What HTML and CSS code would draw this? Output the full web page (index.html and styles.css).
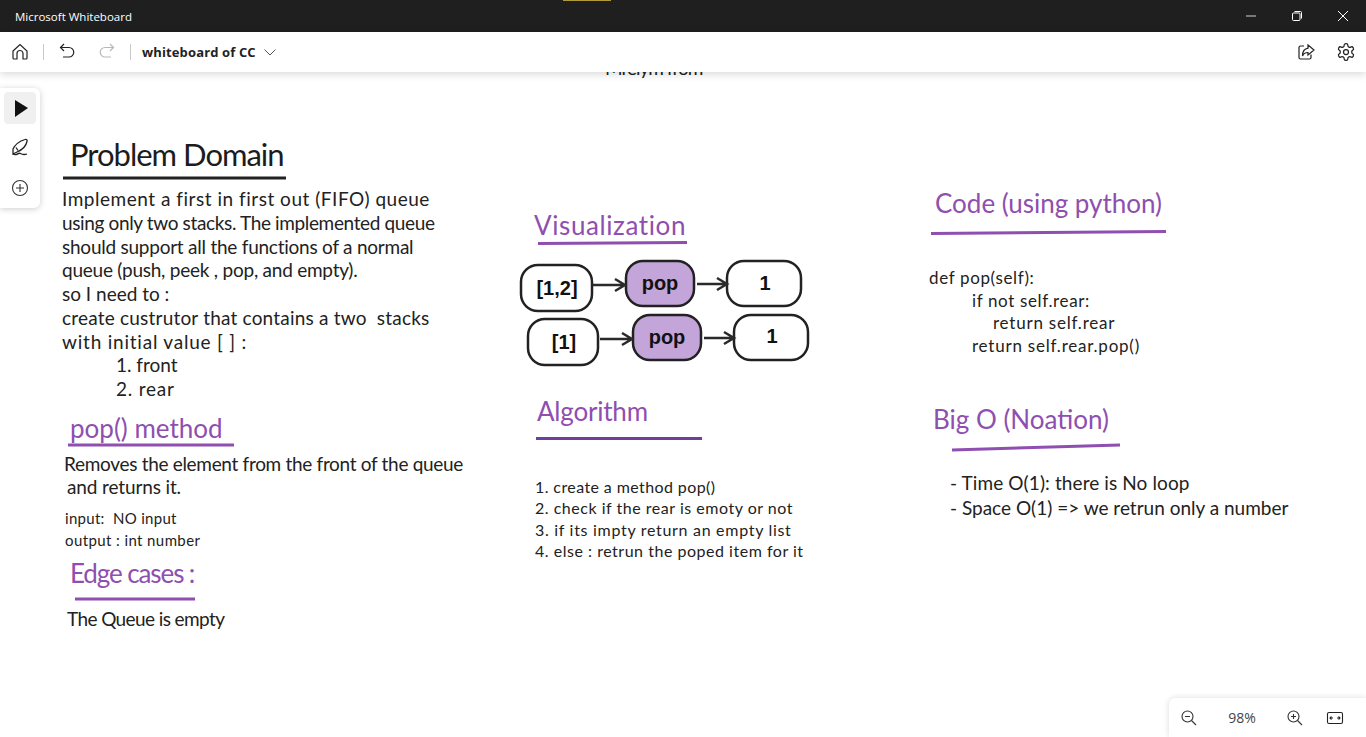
FILE: index.html
```html
<!DOCTYPE html>
<html>
<head>
  <title>Microsoft Whiteboard</title>
  <link rel="stylesheet" href="styles.css">
</head>
<body>
  <div class="titlebar">
    <span class="app-name">Microsoft Whiteboard</span>
    <div class="window-btns">
      <span class="win-btn"><svg width="12" height="12" viewBox="0 0 12 12"><path d="M1 6H11" stroke="#a0a0a0" stroke-width="1.4"/></svg></span>
      <span class="win-btn"><svg width="12" height="12" viewBox="0 0 12 12" fill="none" stroke="#fff"><rect x="1.5" y="3" width="7.5" height="7.5" rx="1"/><path d="M3.5 1.5H9.5a1 1 0 0 1 1 1V8.500"/></svg></span>
      <span class="win-btn"><svg width="12" height="12" viewBox="0 0 12 12"><path d="M1 1L11 11M11 1L1 11" stroke="#fff"/></svg></span>
    </div>
  </div>

  <div class="toolbar">
    <span class="tool-btn"><svg width="20" height="20" viewBox="0 0 20 20" fill="none" stroke="#222" stroke-width="1.2"><path d="M3 9L10 2.500L17 9V16a1 1 0 0 1-1 1H13V11.500a3 3 0 0 0-6 0V17H4a1 1 0 0 1-1-1Z"/></svg></span>
    <span class="sep"></span>
    <span class="tool-btn"><svg width="20" height="20" viewBox="0 0 20 20" fill="none" stroke="#222" stroke-width="1.2"><path d="M7 2L3.500 5.500L7 9"/><path d="M3.500 5.500H12a4.500 4.500 0 0 1 0 9.500H6"/></svg></span>
    <span class="tool-btn redo"><svg width="20" height="20" viewBox="0 0 20 20" fill="none" stroke="#b8b8b8" stroke-width="1.2"><path d="M13 2L16.500 5.500L13 9"/><path d="M16.500 5.500H8a4.500 4.500 0 0 0 0 9.500H14"/></svg></span>
    <span class="sep"></span>
    <span class="board-name">whiteboard of CC</span>
    <span class="chevron"><svg width="14" height="14" viewBox="0 0 14 14" fill="none" stroke="#555" stroke-width="1"><path d="M1.500 4.500L7 10L12.500 4.500"/></svg></span>
    <span class="toolbar-right">
      <span class="tool-btn"><svg width="20" height="20" viewBox="0 0 20 20" fill="none" stroke="#222" stroke-width="1.200"><path d="M8 4H4.500A1.500 1.500 0 0 0 3 5.500V15.500A1.500 1.500 0 0 0 4.500 17H13.500A1.500 1.500 0 0 0 15 15.500V12.500"/><path d="M12 3L18 8L12 13V10.500C9.500 10.500 7.500 11.500 6.500 14C6.500 10 8.500 6.800 12 6.200Z"/></svg></span>
      <span class="tool-btn"><svg width="20" height="20" viewBox="0 0 24 24" fill="none" stroke="#222" stroke-width="1.500"><path d="M12.220 2h-.44a2 2 0 0 0-2 2v.18a2 2 0 0 1-1 1.730l-.43.25a2 2 0 0 1-2 0l-.15-.08a2 2 0 0 0-2.730.73l-.22.38a2 2 0 0 0 .73 2.730l.15.1a2 2 0 0 1 1 1.720v.51a2 2 0 0 1-1 1.740l-.15.09a2 2 0 0 0-.73 2.730l.22.38a2 2 0 0 0 2.730.73l.15-.08a2 2 0 0 1 2 0l.43.25a2 2 0 0 1 1 1.730V20a2 2 0 0 0 2 2h.44a2 2 0 0 0 2-2v-.18a2 2 0 0 1 1-1.730l.43-.25a2 2 0 0 1 2 0l.15.08a2 2 0 0 0 2.730-.73l.22-.39a2 2 0 0 0-.73-2.730l-.15-.08a2 2 0 0 1-1-1.740v-.5a2 2 0 0 1 1-1.740l.15-.09a2 2 0 0 0 .73-2.730l-.22-.38a2 2 0 0 0-2.730-.73l-.15.08a2 2 0 0 1-2 0l-.43-.25a2 2 0 0 1-1-1.730V4a2 2 0 0 0-2-2z"/><circle cx="12" cy="12" r="3"/></svg></span>
    </span>
  </div>

  <div class="board">
    <div class="note cut-off">Mrelym from</div>

    <!-- pen strokes and the pasted diagram, in page coordinates -->
    <svg class="ink" width="1366" height="665" viewBox="0 72 1366 665" fill="none">
      <path class="line-dark" d="M63 178H286"/>
      <path class="line" d="M68 445H234"/>
      <path class="line" d="M75 599H195"/>
      <path class="line" d="M538 243.500L687 242.500"/>
      <path class="line line-deep" d="M536 438.500H702"/>
      <path class="line" d="M931 233.500L1166 231.500"/>
      <path class="line" d="M952 450L1120 445"/>

      <rect class="node" x="521" y="265" width="71" height="46" rx="17"/>
      <rect class="node node-pop" x="626" y="261" width="68" height="45" rx="17"/>
      <rect class="node" x="727" y="261" width="74" height="45" rx="17"/>
      <rect class="node" x="528" y="319" width="70" height="46" rx="17"/>
      <rect class="node node-pop" x="633" y="315" width="68" height="45" rx="17"/>
      <rect class="node" x="734" y="315" width="74" height="45" rx="17"/>

      <path class="arrow" d="M593 285H624M615 279L625 285L615 291"/>
      <path class="arrow" d="M697 284H726M717 278L727 284L717 290"/>
      <path class="arrow" d="M600 339H631M622 333L632 339L622 345"/>
      <path class="arrow" d="M704 338H733M724 332L734 338L724 344"/>

      <text class="node-text" x="557" y="295">[1,2]</text>
      <text class="node-text" x="660" y="290">pop</text>
      <text class="node-text" x="765" y="290">1</text>
      <text class="node-text" x="564" y="349">[1]</text>
      <text class="node-text" x="667" y="344">pop</text>
      <text class="node-text" x="772" y="343">1</text>
    </svg>

    <div class="note heading-dark problem-title">Problem Domain</div>
    <div class="note problem-text">
      <div class="track-p5">Implement a first in first out (FIFO) queue</div>
      <div class="track-n4">using only two stacks. The implemented queue</div>
      <div class="track-n2">should support all the functions of a normal</div>
      <div class="track-n2">queue (push, peek , pop, and empty).</div>
      <div>so I need to :</div>
      <div class="track-p2">create custrutor that contains a two&nbsp; stacks</div>
      <div class="track-p8">with initial value [ ] :</div>
      <div class="indent">1. front</div>
      <div class="indent track-p8">2. rear</div>
    </div>

    <div class="note heading pop-title">pop() method</div>
    <div class="note pop-text">
      <div class="track-n3">Removes the element from the front of the queue</div>
      <div class="nudge">and returns it.</div>
    </div>
    <div class="note io-text">
      <div class="track-p3">input:&nbsp; NO input</div>
      <div class="track-p4">output : int number</div>
    </div>
    <div class="note heading edge-title">Edge cases :</div>
    <div class="note edge-text">The Queue is empty</div>

    <div class="note heading vis-title">Visualization</div>
    <div class="note heading algo-title">Algorithm</div>
    <div class="note algo-text">
      <div class="track-p4">1. create a method pop()</div>
      <div class="track-p5">2. check if the rear is emoty or not</div>
      <div class="track-p7">3. if its impty return an empty list</div>
      <div class="track-p5">4. else : retrun the poped item for it</div>
    </div>

    <div class="note heading code-title">Code (using python)</div>
    <div class="note code-text">
      <div class="track-p6">def pop(self):</div>
      <div class="code-1 track-p6">if not self.rear:</div>
      <div class="code-2 track-p8">return self.rear</div>
      <div class="code-1 track-p8">return self.rear.pop()</div>
    </div>

    <div class="note heading big-title">Big O (Noation)</div>
    <div class="note big-text">
      <div class="track-p1">- Time O(1): there is No loop</div>
      <div>- Space O(1) =&gt; we retrun only a number</div>
    </div>

    <div class="side-tools">
      <span class="side-btn active"><svg width="20" height="20" viewBox="0 0 20 20"><path d="M5 2L18 10L5 19Z" fill="#111"/></svg></span>
      <span class="side-btn"><svg width="20" height="20" viewBox="0 0 20 20" fill="none" stroke="#222" stroke-width="1.300"><path d="M15 1.500C16.500 1 17.500 2 17 3.500C16 8 12 12 7 14L3 16L3 11C5 7 10 3 15 1.500Z"/><path d="M6 9.500L8 12.500"/><path d="M3 16C7 18.500 8 14 10.500 15.500C12.500 16.800 14 17 17 16"/></svg></span>
      <span class="side-btn"><svg width="20" height="20" viewBox="0 0 20 20" fill="none" stroke="#333" stroke-width="1.100"><circle cx="10" cy="10" r="7.500"/><path d="M10 6V14M6 10H14"/></svg></span>
    </div>

    <div class="zoom-panel">
      <span class="zoom-btn"><svg width="18" height="18" viewBox="0 0 18 18" fill="none" stroke="#333" stroke-width="1.100"><circle cx="7.500" cy="7.500" r="5.500"/><path d="M5 7.500H10M11.500 11.500L16 16"/></svg></span>
      <span class="zoom-value">98%</span>
      <span class="zoom-btn"><svg width="18" height="18" viewBox="0 0 18 18" fill="none" stroke="#333" stroke-width="1.100"><circle cx="7.500" cy="7.500" r="5.500"/><path d="M5 7.500H10M7.500 5V10M11.500 11.500L16 16"/></svg></span>
      <span class="zoom-btn"><svg width="18" height="18" viewBox="0 0 18 18" fill="none" stroke="#222" stroke-width="1.100"><rect x="1.500" y="3.500" width="15" height="11" rx="1.500"/><path d="M4 9H7M11 9H14"/><path d="M5.500 7.500L4 9L5.500 10.500M12.500 7.500L14 9L12.500 10.500"/></svg></span>
    </div>
  </div>
</body>
</html>
```

FILE: styles.css
```css
/* Page frame */

body {
  margin: 0;
  width: 1366px;
  height: 737px;
  overflow: hidden;
  background-color: #fff;
  font-family: "Open Sans", "Noto Sans", sans-serif;
}

.titlebar {
  position: relative;
  display: flex;
  align-items: center;
  height: 32px;
  padding-left: 15px;
  background-color: #201f1f;
  color: #fff;
  font-size: 11.500px;
}

/* sliver of a notification sitting over the title bar */
.titlebar::before {
  content: "";
  position: absolute;
  left: 563px;
  top: 0;
  width: 48px;
  height: 1px;
  background-color: #b39a38;
}

.window-btns {
  display: flex;
  margin-left: auto;
}

.win-btn {
  display: flex;
  align-items: center;
  justify-content: center;
  width: 46px;
  height: 32px;
}

.toolbar {
  position: relative;
  z-index: 2;
  display: flex;
  align-items: center;
  height: 40px;
  padding: 0 8px;
  background-color: #fff;
  box-shadow: 0 2px 8px rgba(0, 0, 0, 0.16);
}

.tool-btn {
  display: flex;
  align-items: center;
  justify-content: center;
  width: 24px;
  height: 24px;
}

.sep {
  width: 1px;
  height: 16px;
  margin: 0 11px;
  background-color: #c8c8c8;
}

.redo {
  margin-left: 16px;
}

.board-name {
  color: #222;
  font-size: 13px;
  font-weight: 700;
  letter-spacing: 0.13px;
}

.chevron {
  display: flex;
  margin-left: 7px;
}

.toolbar-right {
  display: flex;
  gap: 16px;
  margin-left: auto;
}

/* Board: a free canvas, notes sit where they were dropped */

.board {
  position: relative;
  height: 665px;
  overflow: hidden;
  background-color: #fff;
}

.ink {
  position: absolute;
  left: 0;
  top: 0;
}

.line,
.line-dark {
  stroke: #8e4fb0;
  stroke-width: 3;
}

.line-dark {
  stroke: #222;
}

.line-deep {
  stroke: #6f3f9e;
}

.node {
  fill: #fff;
  stroke: #222;
  stroke-width: 2.500;
}

.node-pop {
  fill: #c3a5d9;
}

.arrow {
  stroke: #2a2a2a;
  stroke-width: 2.500;
}

.node-text {
  fill: #111;
  font-family: "Liberation Sans", sans-serif;
  font-size: 20px;
  font-weight: 700;
  text-anchor: middle;
}

.note {
  position: absolute;
  color: #222;
  font-family: Lato, sans-serif;
  font-size: 19px;
  white-space: nowrap;
}

.heading,
.heading-dark {
  color: #8e4fb0;
  font-size: 26px;
  line-height: 34px;
}

.heading-dark {
  color: #1c1c1c;
  font-size: 31px;
  line-height: 40px;
  letter-spacing: -1px;
}

.track-n4 { letter-spacing: -0.36px; }
.track-n3 { letter-spacing: -0.31px; }
.track-n2 { letter-spacing: -0.24px; }
.track-p1 { letter-spacing: 0.1px; }
.track-p2 { letter-spacing: 0.2px; }
.track-p3 { letter-spacing: 0.3px; }
.track-p4 { letter-spacing: 0.4px; }
.track-p5 { letter-spacing: 0.52px; }
.track-p6 { letter-spacing: 0.64px; }
.track-p7 { letter-spacing: 0.7px; }
.track-p8 { letter-spacing: 0.78px; }

.cut-off {
  left: 605px;
  top: -16px;
  line-height: 24px;
  letter-spacing: -1px;
}

.problem-title {
  left: 70px;
  top: 62px;
}

.problem-text {
  left: 62px;
  top: 115px;
  line-height: 23.750px;
}

.indent {
  padding-left: 54px;
}

.pop-title {
  left: 70px;
  top: 339px;
}

.pop-text {
  left: 64px;
  top: 380px;
  line-height: 23px;
}

.nudge {
  padding-left: 3px;
  letter-spacing: -0.13px;
}

.io-text {
  left: 65px;
  top: 435px;
  font-size: 15px;
  line-height: 22px;
}

.edge-title {
  left: 70px;
  top: 484px;
  letter-spacing: -1.1px;
}

.edge-text {
  left: 67px;
  top: 535px;
  line-height: 24px;
  letter-spacing: -0.6px;
}

.vis-title {
  left: 534px;
  top: 136px;
  letter-spacing: 0.6px;
}

.algo-title {
  left: 537px;
  top: 322px;
  letter-spacing: -0.2px;
}

.algo-text {
  left: 535px;
  top: 404px;
  font-size: 16px;
  line-height: 21.300px;
}

.code-title {
  left: 935px;
  top: 114px;
}

.code-text {
  left: 929px;
  top: 195px;
  font-size: 17px;
  line-height: 22.600px;
}

.code-1 {
  padding-left: 43px;
}

.code-2 {
  padding-left: 64px;
}

.big-title {
  left: 933px;
  top: 330px;
}

.big-text {
  left: 950px;
  top: 398px;
  line-height: 25px;
}

/* Floating panels */

.side-tools {
  position: absolute;
  left: 0;
  top: 16px;
  display: flex;
  flex-direction: column;
  align-items: center;
  gap: 8px;
  width: 40px;
  padding: 4px 0 4px;
  background-color: #fff;
  border-radius: 0 6px 6px 0;
  box-shadow: 0 1px 6px rgba(0, 0, 0, 0.2);
}

.side-btn {
  display: flex;
  align-items: center;
  justify-content: center;
  width: 32px;
  height: 32px;
  border-radius: 4px;
}

.side-btn.active {
  background-color: #f0f0f0;
}

.zoom-panel {
  position: absolute;
  right: 0;
  bottom: 0;
  display: flex;
  align-items: center;
  width: 197px;
  height: 39px;
  padding-left: 11px;
  box-sizing: border-box;
  background-color: #fff;
  border-radius: 6px 0 0 0;
  box-shadow: 0 0 6px rgba(0, 0, 0, 0.14);
}

.zoom-btn {
  display: flex;
  width: 18px;
  height: 18px;
  margin-right: 22px;
}

.zoom-value {
  width: 92px;
  margin-left: -22px;
  color: #444;
  font-size: 14px;
  text-align: center;
}
```
